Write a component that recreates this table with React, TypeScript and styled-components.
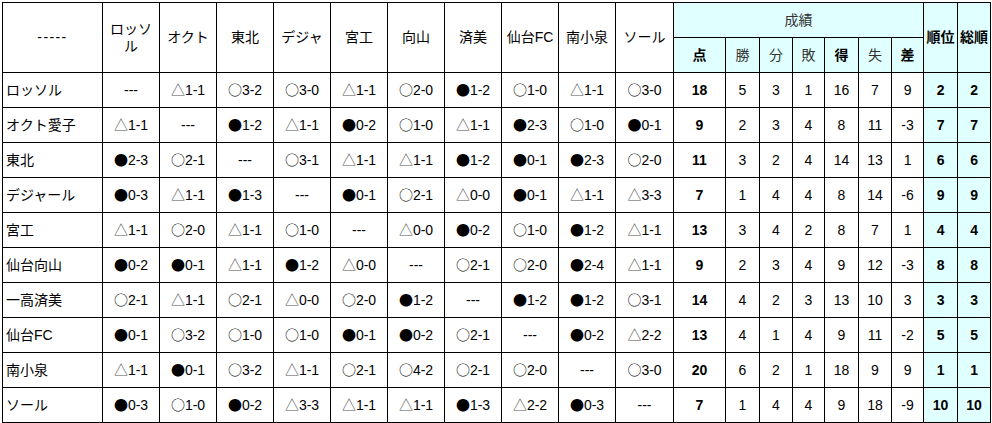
import React from "react";
import styled, { createGlobalStyle } from "styled-components";

const GlobalStyle = createGlobalStyle`
  html, body {
    margin: 0;
    padding: 0;
    background: #ffffff;
  }
  body {
    font-family: "Liberation Sans", "Noto Sans CJK JP", sans-serif;
    color: #000;
  }
`;

const CYAN = "#e0ffff";

const Page = styled.div`
  padding: 2px 0 0 2px;
`;

const Table = styled.table`
  border-collapse: collapse;
  table-layout: fixed;
  width: 989px;
  font-family: "Liberation Sans", "Noto Sans CJK JP", sans-serif;
  font-size: 14px;
  line-height: 1.2;
`;

const Row = styled.tr`
  height: 35px;
`;

const HeadCell = styled.th<{ $tint?: boolean; $bold?: boolean; $muted?: boolean }>`
  border: 1px solid #000;
  padding: 0 2px;
  text-align: center;
  vertical-align: middle;
  font-weight: ${(p) => (p.$bold ? 700 : 400)};
  color: ${(p) => (p.$muted ? "#333" : "#000")};
  background: ${(p) => (p.$tint ? CYAN : "#fff")};
  overflow: hidden;
  word-break: break-all;
`;

const Dashes = styled.span`
  letter-spacing: 1.4px;
`;

const Cell = styled.td<{ $tint?: boolean; $bold?: boolean; $left?: boolean }>`
  border: 1px solid #000;
  padding: 0 3px;
  text-align: ${(p) => (p.$left ? "left" : "center")};
  vertical-align: middle;
  font-weight: ${(p) => (p.$bold ? 700 : 400)};
  background: ${(p) => (p.$tint ? CYAN : "#fff")};
  white-space: nowrap;
  overflow: hidden;
`;

const Mark = styled.span<{ $light?: boolean }>`
  font-family: "Noto Sans CJK JP", sans-serif;
  color: ${(p) => (p.$light ? "#555" : "#000")};
`;

const widths = [100, 57, 57, 57, 57, 57, 57, 57, 57, 57, 58, 52, 34, 33, 32, 34, 33, 32, 34, 33];

const heads = ["ロッソル", "オクト", "東北", "デジャ", "宮工", "向山", "済美", "仙台FC", "南小泉", "ソール"];

type TeamRow = {
  name: string;
  results: string[];
  stats: [number, number, number, number, number, number, number];
  rank: number;
  total: number;
};

const rows: TeamRow[] = [
  { name: "ロッソル", results: ["---", "△1-1", "○3-2", "○3-0", "△1-1", "○2-0", "●1-2", "○1-0", "△1-1", "○3-0"], stats: [18, 5, 3, 1, 16, 7, 9], rank: 2, total: 2 },
  { name: "オクト愛子", results: ["△1-1", "---", "●1-2", "△1-1", "●0-2", "○1-0", "△1-1", "●2-3", "○1-0", "●0-1"], stats: [9, 2, 3, 4, 8, 11, -3], rank: 7, total: 7 },
  { name: "東北", results: ["●2-3", "○2-1", "---", "○3-1", "△1-1", "△1-1", "●1-2", "●0-1", "●2-3", "○2-0"], stats: [11, 3, 2, 4, 14, 13, 1], rank: 6, total: 6 },
  { name: "デジャール", results: ["●0-3", "△1-1", "●1-3", "---", "●0-1", "○2-1", "△0-0", "●0-1", "△1-1", "△3-3"], stats: [7, 1, 4, 4, 8, 14, -6], rank: 9, total: 9 },
  { name: "宮工", results: ["△1-1", "○2-0", "△1-1", "○1-0", "---", "△0-0", "●0-2", "○1-0", "●1-2", "△1-1"], stats: [13, 3, 4, 2, 8, 7, 1], rank: 4, total: 4 },
  { name: "仙台向山", results: ["●0-2", "●0-1", "△1-1", "●1-2", "△0-0", "---", "○2-1", "○2-0", "●2-4", "△1-1"], stats: [9, 2, 3, 4, 9, 12, -3], rank: 8, total: 8 },
  { name: "一高済美", results: ["○2-1", "△1-1", "○2-1", "△0-0", "○2-0", "●1-2", "---", "●1-2", "●1-2", "○3-1"], stats: [14, 4, 2, 3, 13, 10, 3], rank: 3, total: 3 },
  { name: "仙台FC", results: ["●0-1", "○3-2", "○1-0", "○1-0", "●0-1", "●0-2", "○2-1", "---", "●0-2", "△2-2"], stats: [13, 4, 1, 4, 9, 11, -2], rank: 5, total: 5 },
  { name: "南小泉", results: ["△1-1", "●0-1", "○3-2", "△1-1", "○2-1", "○4-2", "○2-1", "○2-0", "---", "○3-0"], stats: [20, 6, 2, 1, 18, 9, 9], rank: 1, total: 1 },
  { name: "ソール", results: ["●0-3", "○1-0", "●0-2", "△3-3", "△1-1", "△1-1", "●1-3", "△2-2", "●0-3", "---"], stats: [7, 1, 4, 4, 9, 18, -9], rank: 10, total: 10 },
];

const Result: React.FC<{ value: string }> = ({ value }) => {
  if (value === "---") return <>---</>;
  const sym = value.charAt(0);
  return (
    <>
      <Mark $light={sym === "△"}>{sym}</Mark>
      {value.slice(1)}
    </>
  );
};

const subHeads: { label: string; bold: boolean }[] = [
  { label: "点", bold: true },
  { label: "勝", bold: false },
  { label: "分", bold: false },
  { label: "敗", bold: false },
  { label: "得", bold: true },
  { label: "失", bold: false },
  { label: "差", bold: true },
];

export default function App() {
  return (
    <Page>
      <GlobalStyle />
      <Table>
        <colgroup>
          {widths.map((w, i) => (
            <col key={i} style={{ width: w }} />
          ))}
        </colgroup>
        <thead>
          <Row>
            <HeadCell rowSpan={2}>
              <Dashes>-----</Dashes>
            </HeadCell>
            {heads.map((h) => (
              <HeadCell key={h} rowSpan={2}>
                {h}
              </HeadCell>
            ))}
            <HeadCell colSpan={7} $tint $muted>
              成績
            </HeadCell>
            <HeadCell rowSpan={2} $tint $bold>
              順位
            </HeadCell>
            <HeadCell rowSpan={2} $tint $bold>
              総順
            </HeadCell>
          </Row>
          <Row>
            {subHeads.map((s) => (
              <HeadCell key={s.label} $tint $bold={s.bold} $muted={!s.bold}>
                {s.label}
              </HeadCell>
            ))}
          </Row>
        </thead>
        <tbody>
          {rows.map((r) => (
            <Row key={r.name}>
              <Cell $left>{r.name}</Cell>
              {r.results.map((v, i) => (
                <Cell key={i}>
                  <Result value={v} />
                </Cell>
              ))}
              {r.stats.map((s, i) => (
                <Cell key={i} $bold={i === 0}>
                  {s}
                </Cell>
              ))}
              <Cell $tint $bold>
                {r.rank}
              </Cell>
              <Cell $tint $bold>
                {r.total}
              </Cell>
            </Row>
          ))}
        </tbody>
      </Table>
    </Page>
  );
}
